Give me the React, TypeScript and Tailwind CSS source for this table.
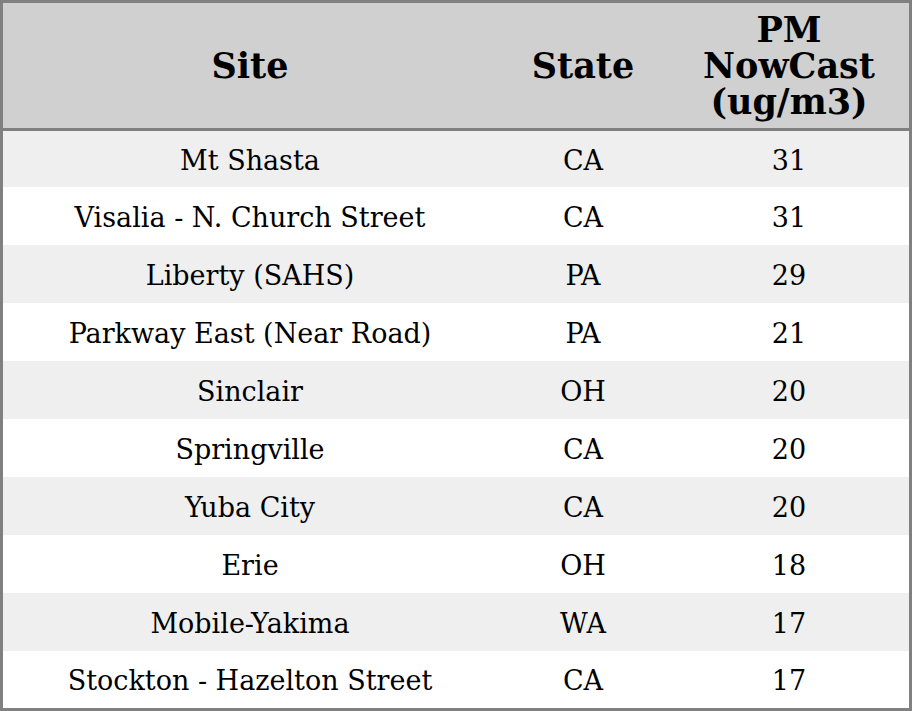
const rows: [string, string, string][] = [
  ['Mt Shasta', 'CA', '31'],
  ['Visalia - N. Church Street', 'CA', '31'],
  ['Liberty (SAHS)', 'PA', '29'],
  ['Parkway East (Near Road)', 'PA', '21'],
  ['Sinclair', 'OH', '20'],
  ['Springville', 'CA', '20'],
  ['Yuba City', 'CA', '20'],
  ['Erie', 'OH', '18'],
  ['Mobile-Yakima', 'WA', '17'],
  ['Stockton - Hazelton Street', 'CA', '17'],
]

export default function App() {
  return (
    <div className="h-[711px] w-[912px] overflow-hidden bg-white font-['DejaVu_Serif',serif] text-black">
      <div className="flex h-full flex-col border-[3px] border-[#808080]">
        <div className="grid h-[125px] grid-cols-[494px_172px_1fr] items-center bg-[#d0d0d0] text-center text-[35px] font-bold leading-[36px]">
          <div>Site</div>
          <div>State</div>
          <div>
            PM
            <br />
            NowCast
            <br />
            (ug/m3)
          </div>
        </div>
        <div className="h-[3px] bg-[#808080]" />
        {rows.map(([site, state, pm], i) => (
          <div
            key={site}
            className={`grid grid-cols-[494px_172px_1fr] items-center pt-[4px] text-center text-[27px] ${
              i === 0 ? 'h-[56px]' : i === rows.length - 1 ? 'h-[57px]' : 'h-[58px]'
            } ${i % 2 === 0 ? 'bg-[#efefef]' : 'bg-white'}`}
          >
            <div>{site}</div>
            <div>{state}</div>
            <div>{pm}</div>
          </div>
        ))}
      </div>
    </div>
  )
}
